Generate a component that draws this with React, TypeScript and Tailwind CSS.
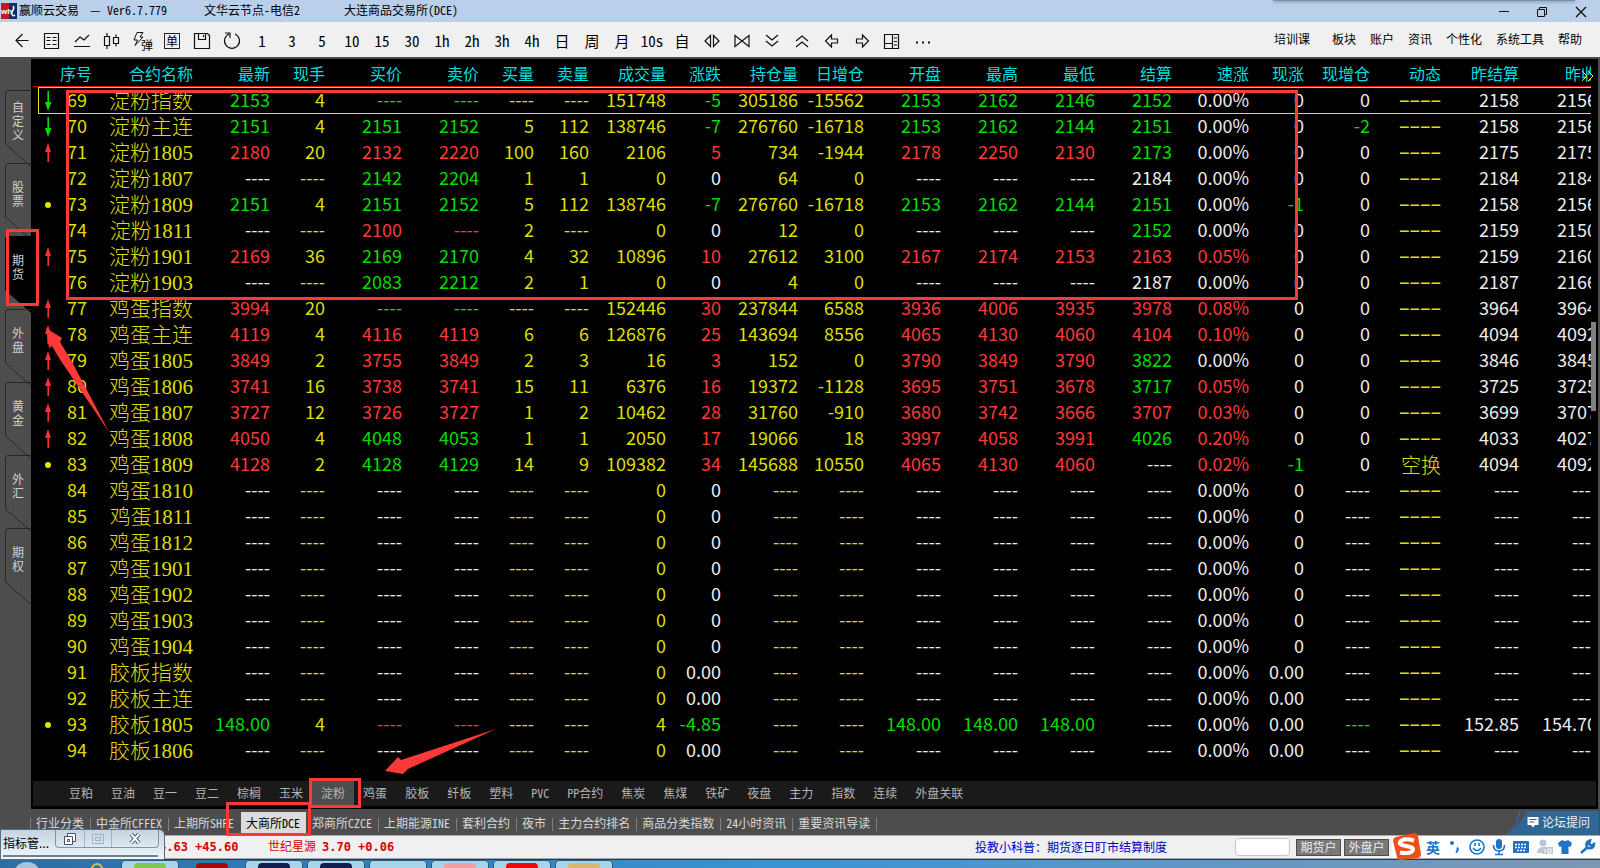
import { Fragment, type ReactNode } from 'react'

const COLORS: Record<string, string> = {
    r: 'text-[#ff3838]',
    g: 'text-[#00de00]',
    w: 'text-[#ececec]',
    y: 'text-[#dede00]',
}

const columns = [
    { label: '最新', width: 'w-[77px]', color: 'w' },
    { label: '现手', width: 'w-[55px]', color: 'y' },
    { label: '买价', width: 'w-[77px]', color: 'w' },
    { label: '卖价', width: 'w-[77px]', color: 'w' },
    { label: '买量', width: 'w-[55px]', color: 'y' },
    { label: '卖量', width: 'w-[55px]', color: 'y' },
    { label: '成交量', width: 'w-[77px]', color: 'y' },
    { label: '涨跌', width: 'w-[55px]', color: 'w' },
    { label: '持仓量', width: 'w-[77px]', color: 'y' },
    { label: '日增仓', width: 'w-[66px]', color: 'y' },
    { label: '开盘', width: 'w-[77px]', color: 'w' },
    { label: '最高', width: 'w-[77px]', color: 'w' },
    { label: '最低', width: 'w-[77px]', color: 'w' },
    { label: '结算', width: 'w-[77px]', color: 'w' },
    { label: '速涨', width: 'w-[77px]', color: 'w' },
    { label: '现涨', width: 'w-[55px]', color: 'w' },
    { label: '现增仓', width: 'w-[66px]', color: 'w' },
    { label: '动态', width: 'w-[71px]', color: 'y' },
    { label: '昨结算', width: 'w-[78px]', color: 'w' },
    { label: '昨收', width: 'w-[78px]', color: 'w' },
]

// an "r", "g" or "w" in front of a value overrides the column color
const EMPTY = '- - - - - - 0 0 - - - - - - 0.00% 0 - - - -'
const EMPTY_DEC = '- - - - - - 0 0.00 - - - - - - 0.00% 0.00 - - - -'

const rows: [number, string, string, string][] = [
    [69, '淀粉指数', 'down', 'g2153 4 g- g- - - 151748 g-5 305186 -15562 g2153 g2162 g2146 g2152 0.00% 0 0 - 2158 2156'],
    [70, '淀粉主连', 'down', 'g2151 4 g2151 g2152 5 112 138746 g-7 276760 -16718 g2153 g2162 g2144 g2151 0.00% 0 g-2 - 2158 2156'],
    [71, '淀粉1805', 'up', 'r2180 20 r2132 r2220 100 160 2106 r5 734 -1944 r2178 r2250 r2130 g2173 0.00% 0 0 - 2175 2175'],
    [72, '淀粉1807', '', '- - g2142 g2204 1 1 0 0 64 0 - - - 2184 0.00% 0 0 - 2184 2184'],
    [73, '淀粉1809', 'dot', 'g2151 4 g2151 g2152 5 112 138746 g-7 276760 -16718 g2153 g2162 g2144 g2151 0.00% g-1 0 - 2158 2156'],
    [74, '淀粉1811', '', '- - r2100 r- 2 - 0 0 12 0 - - - g2152 0.00% 0 0 - 2159 2150'],
    [75, '淀粉1901', 'up', 'r2169 36 g2169 g2170 4 32 10896 r10 27612 3100 r2167 r2174 r2153 r2163 r0.05% 0 0 - 2159 2160'],
    [76, '淀粉1903', '', '- - g2083 g2212 2 1 0 0 4 0 - - - 2187 0.00% 0 0 - 2187 2166'],
    [77, '鸡蛋指数', 'up', 'r3994 20 g- g- - - 152446 r30 237844 6588 r3936 r4006 r3935 r3978 r0.08% 0 0 - 3964 3964'],
    [78, '鸡蛋主连', 'up', 'r4119 4 r4116 r4119 6 6 126876 r25 143694 8556 r4065 r4130 r4060 r4104 r0.10% 0 0 - 4094 4092'],
    [79, '鸡蛋1805', 'up', 'r3849 2 r3755 r3849 2 3 16 r3 152 0 r3790 r3849 r3790 g3822 0.00% 0 0 - 3846 3845'],
    [80, '鸡蛋1806', 'up', 'r3741 16 r3738 r3741 15 11 6376 r16 19372 -1128 r3695 r3751 r3678 g3717 r0.05% 0 0 - 3725 3725'],
    [81, '鸡蛋1807', 'up', 'r3727 12 r3726 r3727 1 2 10462 r28 31760 -910 r3680 r3742 r3666 r3707 r0.03% 0 0 - 3699 3707'],
    [82, '鸡蛋1808', 'up', 'r4050 4 g4048 g4053 1 1 2050 r17 19066 18 r3997 r4058 r3991 g4026 r0.20% 0 0 - 4033 4027'],
    [83, '鸡蛋1809', 'dot', 'r4128 2 g4128 g4129 14 9 109382 r34 145688 10550 r4065 r4130 r4060 - r0.02% g-1 0 空换 4094 4092'],
    [84, '鸡蛋1810', '', EMPTY],
    [85, '鸡蛋1811', '', EMPTY],
    [86, '鸡蛋1812', '', EMPTY],
    [87, '鸡蛋1901', '', EMPTY],
    [88, '鸡蛋1902', '', EMPTY],
    [89, '鸡蛋1903', '', EMPTY],
    [90, '鸡蛋1904', '', EMPTY],
    [91, '胶板指数', '', EMPTY_DEC],
    [92, '胶板主连', '', EMPTY_DEC],
    [93, '胶板1805', 'dot', 'g148.00 4 r- r- - - 4 g-4.85 - - g148.00 g148.00 g148.00 - 0.00% 0.00 g- - 152.85 154.70'],
    [94, '胶板1806', '', EMPTY_DEC],
]

const periods = ['1', '3', '5', '10', '15', '30', '1h', '2h', '3h', '4h', '日', '周', '月', '10s', '自']
const menus = ['板块', '账户', '资讯', '个性化', '系统工具', '帮助']
const markets = ['自定义', '股票', '期货', '外盘', '黄金', '外汇', '期权']
const products = ['豆粕', '豆油', '豆一', '豆二', '棕榈', '玉米', '淀粉', '鸡蛋', '胶板', '纤板', '塑料', 'PVC', 'PP合约', '焦炭', '焦煤', '铁矿', '夜盘', '主力', '指数', '连续', '外盘关联']
const exchanges = ['行业分类', '中金所CFFEX', '上期所SHFE', '大商所DCE', '郑商所CZCE', '上期能源INE', '套利合约', '夜市', '主力合约排名', '商品分类指数', '24小时资讯', '重要资讯导读']

const ToolIcon = ({ label, children }: { label: string; children: ReactNode }) => (
    <button aria-label={label} className="flex w-[30px] shrink-0 items-center justify-center">
        <svg width="20" height="20" viewBox="0 0 20 20" fill="none" stroke="#111" strokeWidth="1.2">{children}</svg>
    </button>
)

const Mark = ({ type }: { type: string }) => {
    if (type === '') return null
    return (
        <svg className="mx-auto" width="8" height="20" viewBox="0 0 8 20">
            {type === 'dot' && <circle cx="4" cy="10" r="3" fill="#e6e600" />}
            {type === 'up' && <path d="M4 0l3 9H5v10H3.400V9H1z" fill="#ff3030" />}
            {type === 'down' && <path d="M3.400 0H5v11h2.500L4 20 1 11h2.400z" fill="#00de00" />}
        </svg>
    )
}

const Cell = ({ value, index }: { value: string; index: number }) => {
    const own = /^[rgw]/.test(value)
    const text = own ? value.slice(1) : value
    const color = COLORS[own ? value[0] : columns[index].color]
    // the status column draws its dashes wider
    if (index === 17) {
        return (
            <td className={`p-0 text-right leading-6 ${color} ${text === '-' ? 'font-["Liberation_Sans",sans-serif]' : 'text-[20px] font-light'}`}>
                {text === '-' ? '−−−−' : text}
            </td>
        )
    }
    return (
        <td className={`p-0 pb-[3px] text-right leading-[23px] ${color}`}>
            {text === '-' ? '----' : text}
        </td>
    )
}

const TitleBar = () => (
    <header className="relative flex h-[22px] items-center bg-[#bad0ea] pl-[1px]">
        <svg width="16" height="16" viewBox="0 0 16 16">
            <rect width="8" height="16" fill="#c01c1c" />
            <rect x="8" width="8" height="16" fill="#122a66" />
            <path d="M12 3c2 2 0 4-1 6s1 5 3 3" stroke="#fff" strokeWidth="1.5" fill="none" />
            <text x="0" y="11" fontSize="8" fontWeight="bold" fill="#fff" fontFamily="Liberation Sans">wh</text>
        </svg>
        <h1 className="ml-[2px] flex whitespace-pre pb-[2px]">
            <span className="w-[71px]">赢顺云交易</span>
            <span className="w-[17px]">—</span>
            <span className="w-[97px]">Ver6.7.779</span>
            <span className="w-[140px]">文华云节点-电信2</span>
            <span>大连商品交易所(DCE)</span>
        </h1>
        <div className="ml-auto flex items-center gap-[23px] pr-[11px] pt-[2px]">
            <button aria-label="最小化"><svg width="16" height="14" viewBox="0 0 16 14" stroke="#111"><path d="M4 6.500h10" /></svg></button>
            <button aria-label="还原">
                <svg width="16" height="14" viewBox="0 0 16 14" fill="none" stroke="#111"><path d="M3.500 4.500h7v7h-7zM5.500 4.500v-2h7v7h-2" /></svg>
            </button>
            <button aria-label="关闭"><svg width="16" height="14" viewBox="0 0 16 14" stroke="#111" strokeWidth="1.300"><path d="M3 2l10 10M13 2L3 12" /></svg></button>
        </div>
        <div className="absolute right-[25px] top-0 h-px w-[302px] bg-[#7d8fa6] shadow-[0_1px_3px_#5f7188]" />
    </header>
)

const ToolBar = () => (
    <div className="flex h-[35px] items-center bg-[#f0f0f0] pl-[7px] pt-[2px]">
        <ToolIcon label="返回"><path d="M16.500 9.500H4M10.500 3L4 9.500l6.500 6.500" /></ToolIcon>
        <ToolIcon label="报价"><path d="M2.500 2.500h14v15h-14zM4.500 6.500h4m2 0h4m-10 3h4m2 0h4m-10 4h4m2 0h4" /></ToolIcon>
        <ToolIcon label="分时"><path d="M3 11l5-5 4 3 5-5M2 15.500h16" /></ToolIcon>
        <ToolIcon label="K线"><path d="M2.500 5.500h5v9h-5zM5 2v3.500m0 9V18M11.500 6.500h5v6h-5zM14 3.500v3m0 6v3" /></ToolIcon>
        <button className="relative h-8 w-[30px] shrink-0 pl-[10px] pt-[8px] leading-[14px]" aria-label="闪弹">
            <svg className="absolute left-[6px] top-[7px]" width="11" height="15" viewBox="0 0 11 15" fill="none" stroke="#111"><path d="M4 .5h6L7 5h3L2 13.500 4.500 8H1z" /></svg>
            弹
        </button>
        <button className="flex w-[30px] shrink-0 justify-center">
            <span className="border border-[#222] px-[1px] text-xs leading-[14px]">单</span>
        </button>
        <ToolIcon label="保存"><path d="M2.500 2.500h13l2 2v13h-15zM6.500 2.500v6h7v-6M11.500 4v2" /></ToolIcon>
        <ToolIcon label="刷新"><path d="M7 3a7.500 7.500 0 1 0 6 0M3 2h5v5" /></ToolIcon>
        {periods.map(p => (
            <button key={p} className="w-[30px] shrink-0 text-center text-[15px] font-light leading-5">{p}</button>
        ))}
        <ToolIcon label="拉宽"><path d="M8.500 4.500v11L3 10zM11.500 4.500v11L17 10z" /></ToolIcon>
        <ToolIcon label="压缩"><path d="M3 4.500v11l7-5.500zM17 4.500v11l-7-5.500z" /></ToolIcon>
        <ToolIcon label="向下"><path d="M4 4l6 5 6-5M4 10l6 5 6-5" /></ToolIcon>
        <ToolIcon label="向上"><path d="M4 10l6-5 6 5M4 16l6-5 6 5" /></ToolIcon>
        <ToolIcon label="上一个"><path d="M3.500 10l6-6v4h6v4h-6v4z" /></ToolIcon>
        <ToolIcon label="下一个"><path d="M16.500 10l-6-6v4h-6v4h6v4z" /></ToolIcon>
        <ToolIcon label="布局"><path d="M2.500 3.500h14v14h-14zM10.500 3.500v14M2.500 12.500h8M12 7h3m-3 3.500h3m-3 3.500h3" /></ToolIcon>
        <ToolIcon label="更多"><path d="M4 11.500h2m4 0h2m4 0h2" strokeWidth="2" /></ToolIcon>
        <nav className="ml-auto flex shrink-0 gap-[14px] pb-1 pr-[18px]">
            <a href="#" className="mr-[8px]">培训课</a>
            {menus.map(m => <a key={m} href="#">{m}</a>)}
        </nav>
    </div>
)

const SideTabs = () => (
    <nav className="w-[31px] shrink-0 pl-[5px] pt-[31px] text-[#d0d0d0]">
        {markets.map(name => {
            const active = name === '期货'
            return (
                <button key={name} className="relative block h-[73px] w-[26px]">
                    <svg className="absolute left-0 top-0 overflow-visible" width="26" height="77" viewBox="0 0 26 77">
                        <path d="M26 .5H3Q.500 .500 .500 3V54L26 76.500" fill={active ? '#000' : 'none'} stroke={active ? '#000' : '#262626'} />
                    </svg>
                    <span className="relative -mt-[11px] flex h-[62px] items-center px-[7px] leading-[14px] [word-break:break-all]">{name}</span>
                </button>
            )
        })}
    </nav>
)

const QuoteTable = () => (
    <div className="relative ml-[2px] mr-[7px] overflow-hidden">
        <table className="w-full table-fixed border-collapse whitespace-nowrap text-[18px] leading-[26px]">
            <colgroup>
                <col className="w-[30px]" />
                <col className="w-[29px]" />
                <col className="w-[101px]" />
                {columns.map(c => <col key={c.label} className={c.width} />)}
            </colgroup>
            <thead>
                <tr className="h-[29px] text-base text-[#00dede] [&>th]:p-0 [&>th]:pb-px [&>th]:font-normal [&>th]:leading-5">
                    <th aria-label="标记" />
                    <th className="text-right"><span className="-ml-2">序号</span></th>
                    <th className="text-right">合约名称</th>
                    {columns.map(c => <th key={c.label} className="text-right">{c.label}</th>)}
                </tr>
            </thead>
            <tbody>
                {rows.map(([no, name, mark, values]) => (
                    <tr key={no} className="h-[26px] [&>td]:h-[26px]">
                        <td className="p-0"><Mark type={mark} /></td>
                        <td className="p-0 pb-[3px] pr-[5px] text-right leading-[23px] text-[#dede00]">{no}</td>
                        <td className='p-0 text-right font-["Liberation_Serif","Noto_Sans_CJK_SC",serif] text-[21px] font-light text-[#dede00]'>{name}</td>
                        {values.split(' ').map((v, i) => <Cell key={i} value={v} index={i} />)}
                    </tr>
                ))}
            </tbody>
        </table>
        {/* header rule and the row cursor */}
        <div className="absolute inset-x-0 top-[27px] h-px bg-[#e01000]" />
        <div className="absolute left-[5px] right-0 top-[28px] h-[27px] border-y border-l border-[#e6e600]" />
    </div>
)

const ProductTabs = () => (
    <nav className="mb-[3px] ml-[2px] mr-[2px] mt-[17px] flex h-[25px] bg-[#1a1a1a] pl-[27px] text-[#b4b4b4]">
        {products.map(p => (
            <button key={p} className={`shrink-0 px-[9px] pb-[2px] ${p === '淀粉' ? 'bg-[#4d4d4d]' : ''}`}>{p}</button>
        ))}
    </nav>
)

const ExchangeTabs = () => (
    <nav className="flex h-[26px] items-center bg-[#4d4d4d] pl-[30px] text-[#d8d8d8]">
        {exchanges.map(e => (
            <Fragment key={e}>
                <span className={`mt-[4px] h-[13px] w-px shrink-0 ${e === '大商所DCE' || e === '郑商所CZCE' ? '' : 'bg-[#808080]'}`} />
                <button className={`h-[21px] shrink-0 pl-[5px] pr-[6px] pt-[2px] leading-[18px] ${e === '大商所DCE' ? 'bg-[#dcdcdc] text-black' : ''}`}>{e}</button>
            </Fragment>
        ))}
        <span className="mt-[4px] h-[13px] w-px bg-[#808080]" />
        <a href="#" className="relative ml-auto flex h-full items-center pr-[10px] text-[#f0f0f0]">
            <svg className="absolute bottom-0 right-px" width="94" height="24" viewBox="0 0 94 24">
                <path d="M22 0h72v24H0C10 18 12 8 14 0h2C14 8 12 14 8 18 14 14 18 6 22 0z" fill="#2f6694" />
            </svg>
            <svg className="relative mr-[3px]" width="12" height="12" viewBox="0 0 12 12">
                <path d="M.5 1h11v8H8l-2 2.500L4 9H.5z" fill="#fff" />
                <path d="M2.500 3.500h7M2.500 6h5" stroke="#2f6694" />
            </svg>
            <span className="relative">论坛提问</span>
        </a>
    </nav>
)

const StatusBar = () => (
    <footer className="flex h-6 items-center border-y border-[#a8a8a8] bg-[#f0f0f0]">
        <div className='flex shrink-0 whitespace-pre font-["DejaVu_Sans_Mono","Noto_Sans_CJK_SC",monospace] font-bold text-[#d80000]'>
            <span className="w-[268px] pl-[159px]">6.63 +45.60</span>
            <span className="w-[54px] font-normal">世纪星源</span>
            <span>3.70 +0.06</span>
        </div>
        <a href="#" className="ml-auto mr-[68px] shrink-0 text-[#0000c0]">投教小科普：期货逐日盯市结算制度</a>
        <input aria-label="代码" className="mr-[6px] h-[18px] w-[55px] rounded-sm border border-[#c4c4cc] bg-white px-1" />
        <button className="mr-[3px] h-[17px] w-[45px] border border-[#4c4c4c] bg-[#787878] leading-[14px] text-[#ececec]">期货户</button>
        <button className="mr-[3px] h-[17px] w-[45px] border border-[#4c4c4c] bg-[#787878] leading-[14px] text-[#ececec]">外盘户</button>
        <div className="relative flex h-[22px] w-[208px] items-center bg-white text-[#1c73c8]">
            <svg className="absolute -top-[4px] left-0" width="30" height="30" viewBox="0 0 30 30">
                <path d="M4 5l18-4q3 0 4 3l3 18q0 3-3 4L9 28q-4 0-4-3L1 9q0-3 3-4z" fill="#f04e18" />
                <path d="M22 8.500q-11-3-14 1.500c-2 5 13 3 13 7.500q-1 5-13 3" stroke="#fff" strokeWidth="4" fill="none" />
            </svg>
            <button className="ml-[34px] text-[14px] font-bold">英</button>
            <svg className="ml-[8px]" width="152" height="18" viewBox="0 0 152 18" fill="none" stroke="currentColor" strokeWidth="1.600">
                <circle cx="4" cy="5" r="2" fill="currentColor" stroke="none" />
                <path d="M9 9.500q2 2-1 5" strokeWidth="2" />
                <circle cx="29" cy="9" r="7" />
                <path d="M25 10q4 5 8 0M27 5v3M31 5v3" />
                <rect x="48" y="1" width="6" height="10" rx="3" fill="currentColor" stroke="none" />
                <path d="M45.500 7q0 6 5.500 6t5.500-6M51 13v4M47 16.500h8" />
                <rect x="65" y="3" width="16" height="12" rx="1" fill="currentColor" stroke="none" />
                <path d="M67 6.500h12M67 9.500h12M69 12.500h8" stroke="#fff" strokeDasharray="2 1" strokeWidth="1.300" />
                <g stroke="none" fill="#bfc6d4"><circle cx="95" cy="5" r="3.500" /><path d="M89 15q0-6 6-6t6 6z" /><path d="M94 9h11v7H94z" /></g>
                <path d="M97 11v4M100 11h3v4h-3z" stroke="#fff" strokeWidth="1" />
                <path d="M114 2l-4 3 1.500 4 2-.500V16h7V8.500l2 .500 1.500-4-4-3q-3 2-6 0z" fill="currentColor" stroke="none" />
                <path d="M133 15l6.500-6M139 9q-2-5 3-6.500L141 6l2 1.500 3-1.500q0 5-6 4z" strokeWidth="2.500" />
            </svg>
        </div>
    </footer>
)

const tasks = [
    { name: 'browser', icon: 'bg-[#7ec850]' },
    { name: 'pinned', icon: 'bg-[#a80808]' },
    { name: 'quotes', icon: 'bg-[#10204e]' },
    { name: 'trade', icon: 'bg-[#10204e]' },
    { name: 'folder', icon: 'bg-transparent' },
    { name: 'pdf', icon: 'bg-[#f0a0a0]' },
    { name: 'player', icon: 'bg-[#f00808]' },
    { name: 'notes', icon: 'bg-[#d8b870]' },
]

const TaskBar = () => (
    <div className="flex h-[9px] gap-1 overflow-hidden border-t border-[#1c3c5c] bg-linear-to-r from-[#2c6ea4] via-[#3a94d4] to-[#7c98b4] pl-[13px]">
        <div className="mt-[2px] h-7 w-7 shrink-0 rounded-full bg-[#a8c4dc]" />
        <div className="ml-[46px] mr-[14px] mt-[3px] h-3 w-3 shrink-0 rounded-full border-2 border-[#e0c040]" />
        {tasks.map(t => (
            <div key={t.name} className={`h-3 w-[58px] shrink-0 rounded-t-sm border px-3 pt-[2px] ${t.name === 'pinned' ? 'border-transparent' : 'border-[#2a5878] bg-[#a8d4ec]'}`}>
                <div className={`h-3 rounded-sm ${t.icon}`} />
            </div>
        ))}
    </div>
)

const FloatingWindow = () => (
    <div className="absolute left-0 top-[829px] flex h-[31px] w-[165px] items-start rounded-tr-md border border-[#5a6c80] bg-linear-to-b from-[#c4d4e0] to-[#f0f8fc] pl-[2px]">
        <span className="mt-[5px] w-[52px] shrink-0 whitespace-nowrap font-['Noto_Sans_CJK_SC',sans-serif] text-black">指标管...</span>
        <div className="flex h-[18px] rounded-b border border-t-0 border-[#8494a4] [&>button]:flex [&>button]:items-center [&>button]:justify-center">
            <button aria-label="还原" className="w-[28px]">
                <svg width="12" height="12" viewBox="0 0 12 12" fill="#fff" stroke="#4a5468"><path d="M3.500 .5h8v8h-8z" /><path d="M.5 3.500h8v8h-8zM3.500 6.500h2v2h-2z" /></svg>
            </button>
            <button aria-label="最大化" className="w-[28px] border-x border-[#a4b4c4]">
                <svg width="12" height="10" viewBox="0 0 12 10" fill="none" stroke="#a0b0c4"><path d="M.5 .5h11v9H.5zM3.500 3.500h5v3h-5z" /></svg>
            </button>
            <button aria-label="关闭" className="w-[46px]">
                <svg width="12" height="11" viewBox="0 0 12 11"><path d="M2 1l8 9M10 1l-8 9" stroke="#4a5468" strokeWidth="4" /><path d="M2 1l8 9M10 1l-8 9" stroke="#fff" strokeWidth="2" /></svg>
            </button>
        </div>
        <div className="absolute bottom-[2px] left-[2px] right-[6px] h-[2px] bg-[#70808c]" />
    </div>
)

// boxes and arrows marked over the window
const Annotations = () => (
    <div className="pointer-events-none absolute inset-0 [&>div]:absolute [&>div]:border-[3px] [&>div]:border-[#ff3838]">
        <div className="left-[66px] right-[302px] top-[90px] h-[210px]" />
        <div className="left-[6px] top-[229px] h-[77px] w-[33px]" />
        <div className="left-[309px] top-[778px] h-[30px] w-[52px]" />
        <div className="left-[226px] top-[802px] h-[34px] w-[85px]" />
        <svg className="absolute left-0 top-0" width="520" height="800" viewBox="0 0 520 800" fill="#ff3838">
            <path d="M46 328L62 338 60 342 71 360 109 432 61 361 52 346 49 348z" />
            <path d="M385 771L398 757 401 760 496 729 408 769 403 774z" />
        </svg>
    </div>
)

const App = () => {
    return (
        <div className='relative overflow-hidden bg-[#4d4d4d] font-["Noto_Sans_Mono_CJK_SC","Noto_Sans_CJK_SC",sans-serif] text-xs text-black'>
            <TitleBar />
            <ToolBar />
            <main className="flex pt-[2px]">
                <SideTabs />
                <section className="relative mr-[2px] min-w-0 flex-1 bg-black">
                    <div className='font-["Noto_Sans_CJK_SC",sans-serif]'>
                        <QuoteTable />
                    </div>
                    <ProductTabs />
                    <div className="absolute right-[2px] top-[263px] h-[89px] w-[5px] bg-[#808080]" />
                    <svg className="absolute right-[3px] top-[11px]" width="14" height="12" viewBox="0 0 14 12" fill="none" stroke="#e6e600">
                        <path d="M1 1l5 5-5 5M7 1l5 5-5 5" />
                    </svg>
                </section>
            </main>
            <ExchangeTabs />
            <StatusBar />
            <TaskBar />
            <Annotations />
            <FloatingWindow />
        </div>
    )
}

export default App
